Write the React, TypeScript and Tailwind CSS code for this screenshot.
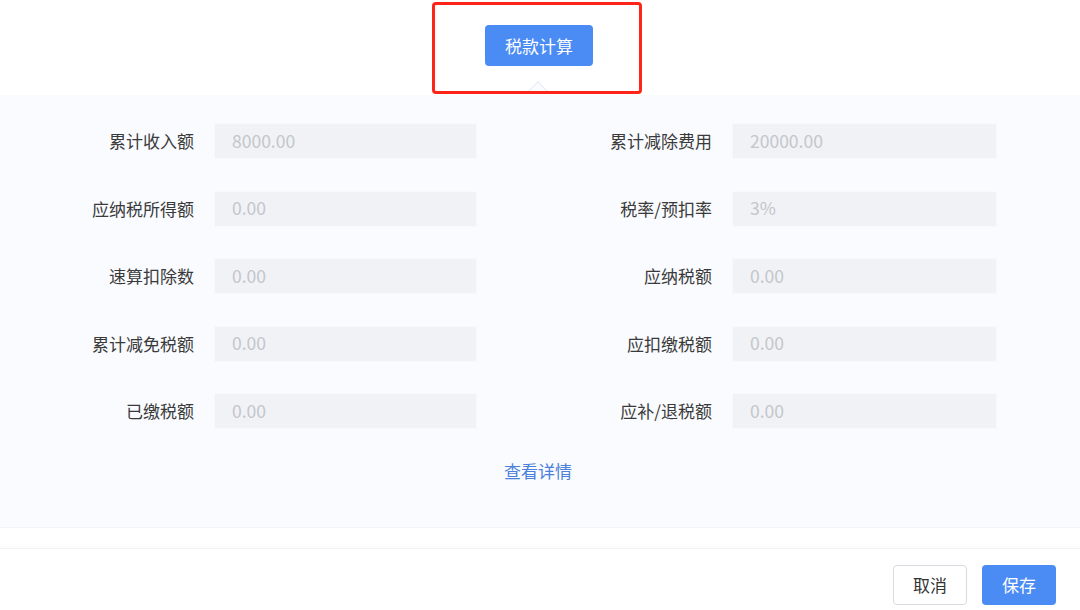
import React from "react";

const rows: [string, string, string, string][] = [
  ["累计收入额", "8000.00", "累计减除费用", "20000.00"],
  ["应纳税所得额", "0.00", "税率/预扣率", "3%"],
  ["速算扣除数", "0.00", "应纳税额", "0.00"],
  ["累计减免税额", "0.00", "应扣缴税额", "0.00"],
  ["已缴税额", "0.00", "应补/退税额", "0.00"],
];

function Field({ label, value, w }: { label: string; value: string; w: string }) {
  return (
    <div className="flex items-center">
      <div className="w-[194px] text-right text-[17px] text-[#3a3a3a]">{label}</div>
      <div className={`ml-[20px] ${w} h-[36px] rounded-[2px] bg-[#f1f2f5] border border-[#f7f8fa] flex items-center pl-[17px] text-[17.5px] text-[#c3c6cc]`}>
        {value}
      </div>
    </div>
  );
}

export default function App() {
  return (
    <div
      className="relative w-[1080px] h-[610px] bg-white overflow-hidden"
      style={{ fontFamily: '"Noto Sans CJK SC", "Noto Sans", sans-serif' }}
    >
      {/* top */}
      <div className="relative h-[95px] flex justify-center pt-[25px]">
        <button className="w-[108px] h-[41px] rounded-[4px] bg-[#4b8bf4] text-white text-[17px] ml-[-2px]">
          税款计算
        </button>
        {/* notch */}
        <div className="absolute left-[531px] top-[84px] w-[14px] h-[14px] rotate-45 bg-[#f9fbff] border-l border-t border-[#e9ecf3]" />
      </div>

      {/* panel */}
      <div className="relative h-[433px] bg-[#f9fbff] border-b border-[#f1f3f7] pt-[28px]">
        <div className="flex flex-col gap-y-[31.5px]">
          {rows.map((r) => (
            <div key={r[0]} className="flex">
              <Field label={r[0]} value={r[1]} w="w-[263px]" />
              <div className="w-[41px]" />
              <Field label={r[2]} value={r[3]} w="w-[265px]" />
            </div>
          ))}
        </div>
        <div className="mt-[30px] text-center text-[17px] text-[#4a80d9] leading-[24px]">
          <span className="ml-[-4px]">查看详情</span>
        </div>
      </div>

      {/* spacer */}
      <div className="h-[20px] bg-white" />

      {/* footer */}
      <div className="h-[62px] border-t border-[#f2f2f4] bg-white flex justify-end items-start pt-[16px] pr-[24px] gap-[15px]" style={{ boxShadow: "0 -2px 4px rgba(0,0,0,0.015)" }}>
        <button className="w-[74px] h-[40px] rounded-[4px] border border-[#d9dbe0] bg-white text-[17px] text-[#333]">
          取消
        </button>
        <button className="w-[74px] h-[40px] rounded-[4px] bg-[#4b8bf4] text-[17px] text-white">
          保存
        </button>
      </div>

      {/* red annotation box */}
      <div className="absolute left-[432px] top-[2px] w-[210px] h-[92px] border-[3px] border-[#ff2418] rounded-[4px] pointer-events-none" />
    </div>
  );
}
